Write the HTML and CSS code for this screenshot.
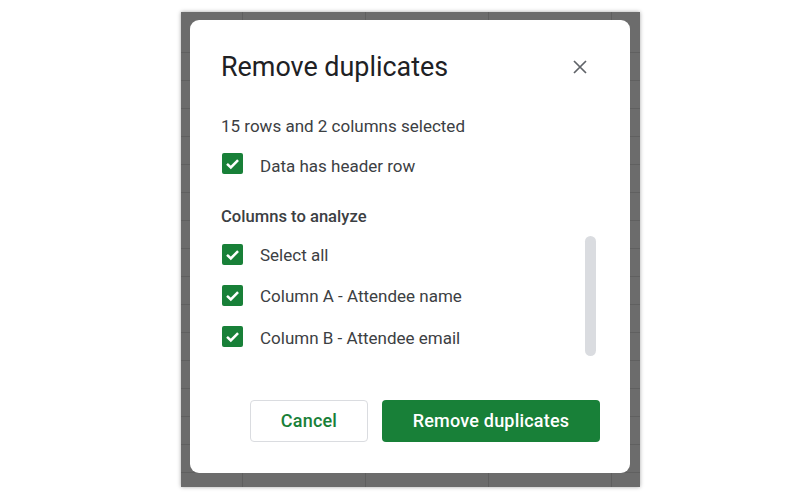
FILE: index.html
```html
<!DOCTYPE html>
<html>
<head>
<meta charset="utf-8">
<link rel="stylesheet" href="styles.css">
</head>
<body>
<div class="backdrop">
  <div class="dialog">
    <div class="header">
      <h1 class="title">Remove duplicates</h1>
      <button class="close" aria-label="Close">
        <svg width="14" height="14" viewBox="0 0 14 14"><path d="M1 1 L13 13 M13 1 L1 13" stroke="#5f6368" stroke-width="1.7" fill="none"/></svg>
      </button>
    </div>
    <p class="summary">15 rows and 2 columns selected</p>
    <label class="row header-row">
      <span class="box"><svg width="21" height="21" viewBox="0 0 20 20"><path d="M4.8 10.3 L8.4 13.8 L15.3 6.7" stroke="#fff" stroke-width="2.4" fill="none"/></svg></span>
      <span class="label">Data has header row</span>
    </label>
    <h2 class="section">Columns to analyze</h2>
    <div class="scroller">
      <div class="list">
        <label class="row item">
          <span class="box"><svg width="21" height="21" viewBox="0 0 20 20"><path d="M4.8 10.3 L8.4 13.8 L15.3 6.7" stroke="#fff" stroke-width="2.4" fill="none"/></svg></span>
          <span class="label">Select all</span>
        </label>
        <label class="row item">
          <span class="box"><svg width="21" height="21" viewBox="0 0 20 20"><path d="M4.8 10.3 L8.4 13.8 L15.3 6.7" stroke="#fff" stroke-width="2.4" fill="none"/></svg></span>
          <span class="label">Column A - Attendee name</span>
        </label>
        <label class="row item">
          <span class="box"><svg width="21" height="21" viewBox="0 0 20 20"><path d="M4.8 10.3 L8.4 13.8 L15.3 6.7" stroke="#fff" stroke-width="2.4" fill="none"/></svg></span>
          <span class="label">Column B - Attendee email</span>
        </label>
      </div>
      <div class="thumb"></div>
    </div>
    <div class="footer">
      <button class="btn cancel">Cancel</button>
      <button class="btn primary">Remove duplicates</button>
    </div>
  </div>
</div>
</body>
</html>
```
FILE: styles.css
```css
html, body {
  margin: 0;
  padding: 0;
  background: #ffffff;
}
body {
  width: 800px;
  height: 500px;
  overflow: hidden;
  font-family: Roboto, "Liberation Sans", sans-serif;
}
.backdrop {
  box-sizing: border-box;
  width: 459px;
  height: 475px;
  margin: 12px 0 0 181px;
  padding: 8px 0 0 9px;
  background-color: #6c6c6c;
  background-image:
    repeating-linear-gradient(90deg, transparent 0, transparent 61px, #5f5f5f 61px, #5f5f5f 62px, transparent 62px, transparent 123px),
    repeating-linear-gradient(180deg, transparent 0, transparent 27px, #606060 27px, #606060 28px);
  background-position: 0 0, 0 13px;
  box-shadow: 0 0 4px rgba(0,0,0,0.35);
}
.dialog {
  box-sizing: border-box;
  width: 440px;
  height: 453px;
  background: #ffffff;
  border-radius: 9px;
  padding: 31px 30px 31px 31px;
  display: flex;
  flex-direction: column;
  color: #3c4043;
}
.header {
  display: flex;
  align-items: center;
  justify-content: space-between;
  height: 32px;
}
.title {
  margin: 0;
  font-family: Roboto, "Liberation Sans", sans-serif;
  font-weight: 400;
  font-size: 26.9px;
  line-height: 32px;
  color: #202124;
}
.close {
  width: 40px;
  height: 32px;
  border: none;
  background: none;
  padding: 0;
  display: flex;
  align-items: center;
  justify-content: center;
}
.summary {
  margin: 31.2px 0 0 0;
  font-size: 17px;
  line-height: 24px;
}
.row {
  display: flex;
  align-items: center;
  gap: 17px;
  font-size: 17px;
  padding-left: 1px;
}
.header-row {
  margin-top: 5.3px;
  height: 40px;
}
.header-row .label {
  padding-top: 5px;
}
.box {
  width: 21px;
  height: 21px;
  border-radius: 2px;
  background: #188038;
  display: flex;
  flex: none;
}
.label {
  line-height: 24px;
  padding-top: 2px;
}
.section {
  margin: 22px 0 0 0;
  font-size: 16.6px;
  font-weight: 500;
  line-height: 24px;
  color: #3c4043;
}
.scroller {
  margin-top: 4px;
  display: flex;
}
.list {
  flex: 1;
  display: flex;
  flex-direction: column;
}
.item {
  height: 41.3px;
}
.thumb {
  width: 11px;
  height: 120px;
  margin: 2.5px 4px 0 0;
  border-radius: 6px;
  background: #dadce0;
}
.footer {
  margin-top: 42.5px;
  display: flex;
  justify-content: flex-end;
  gap: 14px;
}
.btn {
  height: 42px;
  border-radius: 4px;
  font-family: Roboto, "Liberation Sans", sans-serif;
  font-size: 18px;
  font-weight: 500;
  letter-spacing: 0.2px;
  padding: 0;
}
.cancel {
  width: 118px;
  background: #ffffff;
  border: 1px solid #dadce0;
  color: #188038;
}
.primary {
  width: 218px;
  background: #188038;
  border: none;
  color: #ffffff;
}
```
